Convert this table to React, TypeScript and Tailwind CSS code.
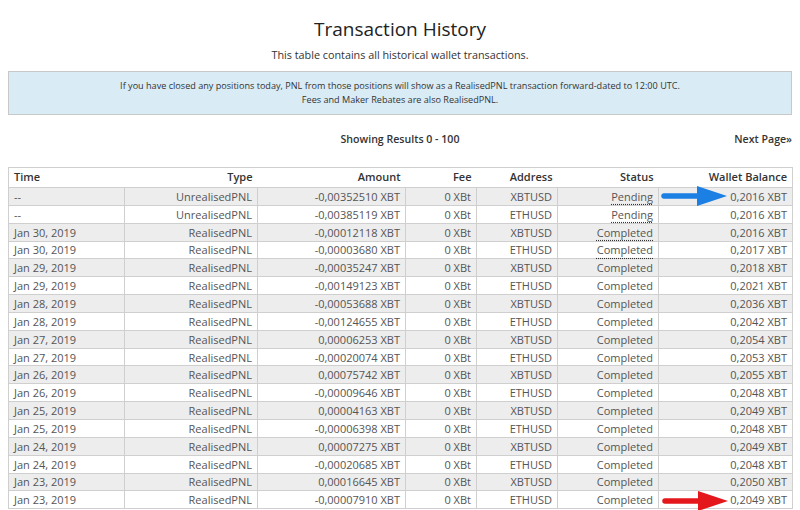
import React from "react";

type Row = {
  time: string;
  type: string;
  amount: string;
  address: string;
  status: string;
  balance: string;
};

const ROWS: Row[] = [
  { time: "--", type: "UnrealisedPNL", amount: "-0,00352510 XBT", address: "XBTUSD", status: "Pending", balance: "0,2016 XBT" },
  { time: "--", type: "UnrealisedPNL", amount: "-0,00385119 XBT", address: "ETHUSD", status: "Pending", balance: "0,2016 XBT" },
  { time: "Jan 30, 2019", type: "RealisedPNL", amount: "-0,00012118 XBT", address: "XBTUSD", status: "Completed", balance: "0,2016 XBT" },
  { time: "Jan 30, 2019", type: "RealisedPNL", amount: "-0,00003680 XBT", address: "ETHUSD", status: "Completed", balance: "0,2017 XBT" },
  { time: "Jan 29, 2019", type: "RealisedPNL", amount: "-0,00035247 XBT", address: "XBTUSD", status: "Completed", balance: "0,2018 XBT" },
  { time: "Jan 29, 2019", type: "RealisedPNL", amount: "-0,00149123 XBT", address: "ETHUSD", status: "Completed", balance: "0,2021 XBT" },
  { time: "Jan 28, 2019", type: "RealisedPNL", amount: "-0,00053688 XBT", address: "XBTUSD", status: "Completed", balance: "0,2036 XBT" },
  { time: "Jan 28, 2019", type: "RealisedPNL", amount: "-0,00124655 XBT", address: "ETHUSD", status: "Completed", balance: "0,2042 XBT" },
  { time: "Jan 27, 2019", type: "RealisedPNL", amount: "0,00006253 XBT", address: "XBTUSD", status: "Completed", balance: "0,2054 XBT" },
  { time: "Jan 27, 2019", type: "RealisedPNL", amount: "-0,00020074 XBT", address: "ETHUSD", status: "Completed", balance: "0,2053 XBT" },
  { time: "Jan 26, 2019", type: "RealisedPNL", amount: "0,00075742 XBT", address: "XBTUSD", status: "Completed", balance: "0,2055 XBT" },
  { time: "Jan 26, 2019", type: "RealisedPNL", amount: "-0,00009646 XBT", address: "ETHUSD", status: "Completed", balance: "0,2048 XBT" },
  { time: "Jan 25, 2019", type: "RealisedPNL", amount: "0,00004163 XBT", address: "XBTUSD", status: "Completed", balance: "0,2049 XBT" },
  { time: "Jan 25, 2019", type: "RealisedPNL", amount: "-0,00006398 XBT", address: "ETHUSD", status: "Completed", balance: "0,2048 XBT" },
  { time: "Jan 24, 2019", type: "RealisedPNL", amount: "0,00007275 XBT", address: "XBTUSD", status: "Completed", balance: "0,2049 XBT" },
  { time: "Jan 24, 2019", type: "RealisedPNL", amount: "-0,00020685 XBT", address: "ETHUSD", status: "Completed", balance: "0,2048 XBT" },
  { time: "Jan 23, 2019", type: "RealisedPNL", amount: "0,00016645 XBT", address: "XBTUSD", status: "Completed", balance: "0,2050 XBT" },
  { time: "Jan 23, 2019", type: "RealisedPNL", amount: "-0,00007910 XBT", address: "ETHUSD", status: "Completed", balance: "0,2049 XBT" },
];

function Arrow({ color }: { color: string }) {
  return (
    <svg width="68" height="22" viewBox="0 0 68 22">
      <path d="M3 11 L40 11" stroke={color} strokeWidth="5.5" strokeLinecap="round" />
      <polygon points="36,1 66,11 36,21" fill={color} />
    </svg>
  );
}

const td = "border border-[#cfcfcf] px-[5px] h-[17.85px] leading-none whitespace-nowrap text-right";

export default function App() {
  return (
    <div className="w-[800px] h-[510px] overflow-hidden bg-white font-['Open_Sans',sans-serif] text-[#444]">
      <h1 className="pt-[15px] text-center text-[19px] leading-[28px] text-[#222]">Transaction History</h1>
      <p className="mt-[5px] text-center text-[10.8px] leading-[14px] text-[#333]">
        This table contains all historical wallet transactions.
      </p>

      <div className="mx-2 mt-[9px] h-[44px] border border-[#c8c8c8] bg-[#d9ebf5] flex flex-col justify-center items-center text-[9.1px] leading-[14px] text-[#333]">
        <span>If you have closed any positions today, PNL from those positions will show as a RealisedPNL transaction forward-dated to 12:00 UTC.</span>
        <span>Fees and Maker Rebates are also RealisedPNL.</span>
      </div>

      <div className="relative mx-2 mt-[17px] h-[16px] flex items-center justify-center text-[10.6px] font-semibold text-[#333]">
        <span>Showing Results 0 - 100</span>
        <span className="absolute right-0">Next Page»</span>
      </div>

      <div className="relative mx-2 mt-[19px]">
        <table className="w-[784px] table-fixed border-collapse text-[11px] text-[#555] border border-[#cfcfcf]">
          <colgroup>
            <col className="w-[116px]" />
            <col className="w-[133px]" />
            <col className="w-[148px]" />
            <col className="w-[71px]" />
            <col className="w-[81px]" />
            <col className="w-[101px]" />
            <col className="w-[134px]" />
          </colgroup>
          <thead>
            <tr className="h-[20px] font-semibold text-[#333]">
              <th className="px-[5px] text-left font-semibold">Time</th>
              <th className="px-[5px] text-right font-semibold">Type</th>
              <th className="px-[5px] text-right font-semibold">Amount</th>
              <th className="px-[5px] text-right font-semibold">Fee</th>
              <th className="px-[5px] text-right font-semibold">Address</th>
              <th className="px-[5px] text-right font-semibold">Status</th>
              <th className="px-[5px] text-right font-semibold">Wallet Balance</th>
            </tr>
          </thead>
          <tbody>
            {ROWS.map((r, i) => (
              <tr key={i} className={i % 2 === 0 ? "bg-[#ededed]" : "bg-white"}>
                <td className={`${td} !text-left`}>{r.time}</td>
                <td className={td}>{r.type}</td>
                <td className={td}>{r.amount}</td>
                <td className={td}>0 XBt</td>
                <td className={td}>{r.address}</td>
                <td className={td}>
                  {i < 4 ? (
                    <span className="underline decoration-dotted decoration-[#333] underline-offset-[3px]">{r.status}</span>
                  ) : (
                    r.status
                  )}
                </td>
                <td className={td}>{r.balance}</td>
              </tr>
            ))}
          </tbody>
        </table>

        <div className="absolute left-[653px] top-[18px]">
          <Arrow color="#1b7fe3" />
        </div>
        <div className="absolute left-[654px] top-[323px]">
          <Arrow color="#e3171c" />
        </div>
      </div>
    </div>
  );
}
